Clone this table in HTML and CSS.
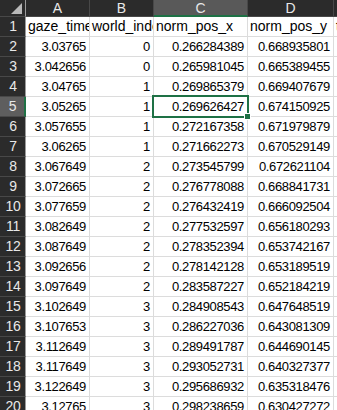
FILE: index.html
```html
<!DOCTYPE html>
<html lang="en">

<head>
  <meta charset="UTF-8" />
  <title>gaze_positions.csv</title>
  <link rel="stylesheet" href="styles.css">
</head>

<body>
  <div class="sheet">
    <!-- column headers -->
    <div class="hd corner"><span class="tri"></span></div>
    <div class="hd">A</div>
    <div class="hd">B</div>
    <div class="hd sel-col">C</div>
    <div class="hd">D</div>
    <div class="hd"></div>

    <div class="rh">1</div><div class="c t">gaze_time</div><div class="c t">world_index</div><div class="c t">norm_pos_x</div><div class="c t">norm_pos_y</div><div class="c t">t</div>
    <div class="rh">2</div><div class="c n">3.03765</div><div class="c n">0</div><div class="c n">0.266284389</div><div class="c n">0.668935801</div><div class="c"></div>
    <div class="rh">3</div><div class="c n">3.042656</div><div class="c n">0</div><div class="c n">0.265981045</div><div class="c n">0.665389455</div><div class="c"></div>
    <div class="rh">4</div><div class="c n">3.04765</div><div class="c n">1</div><div class="c n">0.269865379</div><div class="c n">0.669407679</div><div class="c"></div>
    <div class="rh sel-row">5</div><div class="c n">3.05265</div><div class="c n">1</div><div class="c n active">0.269626427</div><div class="c n">0.674150925</div><div class="c"></div>
    <div class="rh">6</div><div class="c n">3.057655</div><div class="c n">1</div><div class="c n">0.272167358</div><div class="c n">0.671979879</div><div class="c"></div>
    <div class="rh">7</div><div class="c n">3.06265</div><div class="c n">1</div><div class="c n">0.271662273</div><div class="c n">0.670529149</div><div class="c"></div>
    <div class="rh">8</div><div class="c n">3.067649</div><div class="c n">2</div><div class="c n">0.273545799</div><div class="c n">0.672621104</div><div class="c"></div>
    <div class="rh">9</div><div class="c n">3.072665</div><div class="c n">2</div><div class="c n">0.276778088</div><div class="c n">0.668841731</div><div class="c"></div>
    <div class="rh">10</div><div class="c n">3.077659</div><div class="c n">2</div><div class="c n">0.276432419</div><div class="c n">0.666092504</div><div class="c"></div>
    <div class="rh">11</div><div class="c n">3.082649</div><div class="c n">2</div><div class="c n">0.277532597</div><div class="c n">0.656180293</div><div class="c"></div>
    <div class="rh">12</div><div class="c n">3.087649</div><div class="c n">2</div><div class="c n">0.278352394</div><div class="c n">0.653742167</div><div class="c"></div>
    <div class="rh">13</div><div class="c n">3.092656</div><div class="c n">2</div><div class="c n">0.278142128</div><div class="c n">0.653189519</div><div class="c"></div>
    <div class="rh">14</div><div class="c n">3.097649</div><div class="c n">2</div><div class="c n">0.283587227</div><div class="c n">0.652184219</div><div class="c"></div>
    <div class="rh">15</div><div class="c n">3.102649</div><div class="c n">3</div><div class="c n">0.284908543</div><div class="c n">0.647648519</div><div class="c"></div>
    <div class="rh">16</div><div class="c n">3.107653</div><div class="c n">3</div><div class="c n">0.286227036</div><div class="c n">0.643081309</div><div class="c"></div>
    <div class="rh">17</div><div class="c n">3.112649</div><div class="c n">3</div><div class="c n">0.289491787</div><div class="c n">0.644690145</div><div class="c"></div>
    <div class="rh">18</div><div class="c n">3.117649</div><div class="c n">3</div><div class="c n">0.293052731</div><div class="c n">0.640327377</div><div class="c"></div>
    <div class="rh">19</div><div class="c n">3.122649</div><div class="c n">3</div><div class="c n">0.295686932</div><div class="c n">0.635318476</div><div class="c"></div>
    <div class="rh">20</div><div class="c n">3.12765</div><div class="c n">3</div><div class="c n">0.298238659</div><div class="c n">0.630427272</div><div class="c"></div>
  </div>
</body>

</html>
```

FILE: styles.css
```css
body {
  margin: 0;
  background: #fff;
  font-family: 'Liberation Sans', Arial, sans-serif;
  font-size: 13px;
  letter-spacing: -0.35px;
  overflow: hidden;
}

.sheet {
  display: grid;
  grid-template-columns: 26px 64px 64px 94px 86px 1fr;
  grid-template-rows: 17px;
  grid-auto-rows: 20px;
  width: 337px;
}

/* column header strip */
.hd {
  background: #2b2b2b;
  color: #e8e8e8;
  border-right: 1px solid #484848;
  border-bottom: 1px solid #484848;
  box-sizing: border-box;
  display: flex;
  align-items: center;
  justify-content: center;
  line-height: 15px;
  padding-top: 1px;
  font-size: 14px;
  letter-spacing: 0;
}

.corner {
  position: relative;
  border-right-color: #9b9b9b;
}

.tri {
  position: absolute;
  right: 3px;
  bottom: 2px;
  width: 0;
  height: 0;
  border-left: 11px solid transparent;
  border-bottom: 11px solid #b9b9b9;
}

.sel-col {
  background: #595959;
  border-bottom: 2px solid #1e7145;
}

/* row numbers */
.rh {
  background: #2b2b2b;
  color: #e8e8e8;
  border-right: 1px solid #9b9b9b;
  border-bottom: 1px solid #484848;
  box-sizing: border-box;
  display: flex;
  align-items: flex-end;
  justify-content: center;
  padding-bottom: 2px;
  padding-left: 1px;
  font-size: 14px;
  letter-spacing: -0.2px;
}

.sel-row {
  background: #5e5e5e;
  border-right: 2px solid #1e7145;
}

/* cells */
.c {
  border-right: 1px solid #dcdcdc;
  border-bottom: 1px solid #dcdcdc;
  box-sizing: border-box;
  color: #000;
  white-space: nowrap;
  overflow: hidden;
  display: flex;
  align-items: flex-end;
  padding: 0 2px 2px 2px;
}

.t {
  font-size: 14px;
  letter-spacing: 0;
}

.n {
  justify-content: flex-end;
  padding-right: 3px;
}

.active {
  position: relative;
  overflow: visible;
}

.active::before {
  content: "";
  position: absolute;
  left: -2px;
  top: -2px;
  right: -2px;
  bottom: -2px;
  border: 2px solid #1e7145;
  z-index: 2;
}

.active::after {
  content: "";
  position: absolute;
  right: -4px;
  bottom: -4px;
  width: 5px;
  height: 5px;
  background: #1e7145;
  border: 1px solid #fff;
  z-index: 3;
}
```
